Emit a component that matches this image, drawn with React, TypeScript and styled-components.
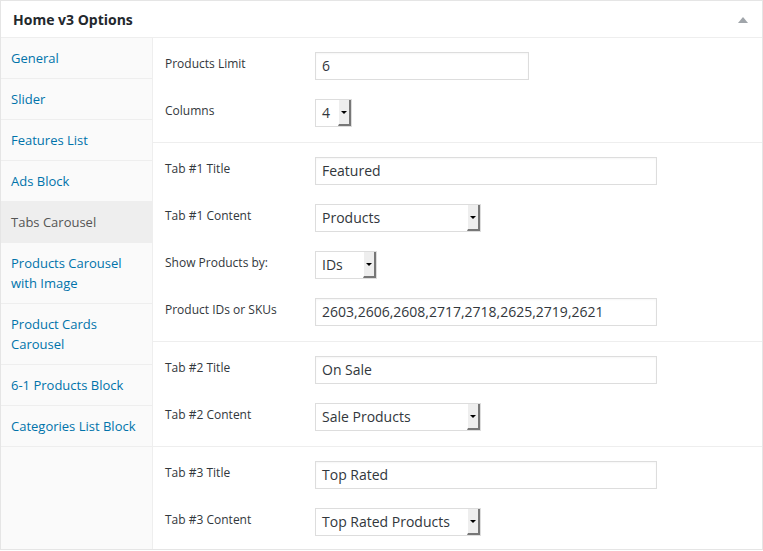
import styled, { createGlobalStyle } from 'styled-components'

const GlobalStyle = createGlobalStyle`
    body {
        margin: 0;
        background: #fff;
        font-family: "Open Sans", "Liberation Sans", sans-serif;
    }
`

const Box = styled.div`
    width: 763px;
    height: 550px;
    box-sizing: border-box;
    border: 1px solid #e5e5e5;
    background: #fff;
    display: flex;
    flex-direction: column;
`

const Header = styled.div`
    flex: none;
    height: 36px;
    border-bottom: 1px solid #eee;
    display: flex;
    align-items: center;
    justify-content: space-between;
    padding: 0 14px 0 12px;
`

const Title = styled.h2`
    margin: 0;
    font-size: 14px;
    font-weight: 700;
    color: #23282d;
`

const Toggle = styled.span`
    width: 0;
    height: 0;
    border-left: 5px solid transparent;
    border-right: 5px solid transparent;
    border-bottom: 6px solid #a0a5aa;
    margin-top: 1px;
`

const Body = styled.div`
    flex: 1;
    min-height: 0;
    display: flex;
`

const Sidebar = styled.ul`
    list-style: none;
    margin: 0;
    padding: 0;
    width: 151px;
    background: #fafafa;
    border-right: 1px solid #eee;
`

const NavItem = styled.li<{ $active?: boolean }>`
    box-sizing: border-box;
    padding: 10px 10px 10px 10px;
    border-bottom: 1px solid #eee;
    font-size: 13px;
    line-height: 20px;
    color: ${p => (p.$active ? '#555' : '#0073aa')};
    background: ${p => (p.$active ? '#eee' : 'transparent')};
`

const Content = styled.div`
    flex: 1;
    display: flex;
    flex-direction: column;
`

const Section = styled.div<{ $last?: boolean }>`
    flex: none;
    display: flex;
    flex-direction: column;
    gap: 19px;
    padding: 14px 12px ${p => (p.$last ? '12px' : '15px')} 12px;
    border-bottom: ${p => (p.$last ? 'none' : '1px solid #eee')};
`

const Row = styled.div`
    display: flex;
    align-items: flex-start;
`

const Label = styled.label`
    width: 150px;
    flex: none;
    font-size: 12px;
    line-height: 18px;
    padding-top: 3px;
    color: #32373c;
`

const TextInput = styled.div<{ $w: number }>`
    width: ${p => p.$w}px;
    height: 28px;
    box-sizing: border-box;
    border: 1px solid #ddd;
    box-shadow: inset 0 1px 2px rgba(0, 0, 0, 0.04);
    padding: 0 6px;
    font-size: 14px;
    line-height: 26px;
    color: #32373c;
`

const SelectBox = styled.div<{ $w: number }>`
    width: ${p => p.$w}px;
    height: 28px;
    box-sizing: border-box;
    border: 1px solid #ddd;
    display: flex;
    align-items: stretch;
    font-size: 14px;
    color: #32373c;
`

const SelectValue = styled.span`
    flex: 1;
    padding: 0 6px;
    line-height: 26px;
    white-space: nowrap;
    overflow: hidden;
`

const SelectButton = styled.span`
    width: 13px;
    flex: none;
    box-sizing: border-box;
    background: #eee;
    border-right: 2px solid #777;
    border-bottom: 2px solid #777;
    border-left: 1px solid #fff;
    display: flex;
    align-items: center;
    justify-content: center;

    &::after {
        content: '';
        width: 0;
        height: 0;
        border-left: 3px solid transparent;
        border-right: 3px solid transparent;
        border-top: 3px solid #000;
    }
`

function Select({ value, width }: { value: string; width: number }) {
    return (
        <SelectBox $w={width}>
            <SelectValue>{value}</SelectValue>
            <SelectButton />
        </SelectBox>
    )
}

const navItems = [
    'General',
    'Slider',
    'Features List',
    'Ads Block',
    'Tabs Carousel',
    'Products Carousel with Image',
    'Product Cards Carousel',
    '6-1 Products Block',
    'Categories List Block',
]

export default function App() {
    return (
        <>
            <GlobalStyle />
            <Box>
                <Header>
                    <Title>Home v3 Options</Title>
                    <Toggle />
                </Header>
                <Body>
                    <Sidebar>
                        {navItems.map(item => (
                            <NavItem key={item} $active={item === 'Tabs Carousel'}>
                                {item}
                            </NavItem>
                        ))}
                    </Sidebar>
                    <Content>
                        <Section>
                            <Row>
                                <Label>Products Limit</Label>
                                <TextInput $w={214}>6</TextInput>
                            </Row>
                            <Row>
                                <Label>Columns</Label>
                                <Select value="4" width={37} />
                            </Row>
                        </Section>
                        <Section>
                            <Row>
                                <Label>Tab #1 Title</Label>
                                <TextInput $w={342}>Featured</TextInput>
                            </Row>
                            <Row>
                                <Label>Tab #1 Content</Label>
                                <Select value="Products" width={166} />
                            </Row>
                            <Row>
                                <Label>Show Products by:</Label>
                                <Select value="IDs" width={62} />
                            </Row>
                            <Row>
                                <Label>Product IDs or SKUs</Label>
                                <TextInput $w={342}>2603,2606,2608,2717,2718,2625,2719,2621</TextInput>
                            </Row>
                        </Section>
                        <Section>
                            <Row>
                                <Label>Tab #2 Title</Label>
                                <TextInput $w={342}>On Sale</TextInput>
                            </Row>
                            <Row>
                                <Label>Tab #2 Content</Label>
                                <Select value="Sale Products" width={166} />
                            </Row>
                        </Section>
                        <Section $last>
                            <Row>
                                <Label>Tab #3 Title</Label>
                                <TextInput $w={342}>Top Rated</TextInput>
                            </Row>
                            <Row>
                                <Label>Tab #3 Content</Label>
                                <Select value="Top Rated Products" width={166} />
                            </Row>
                        </Section>
                    </Content>
                </Body>
            </Box>
        </>
    )
}
